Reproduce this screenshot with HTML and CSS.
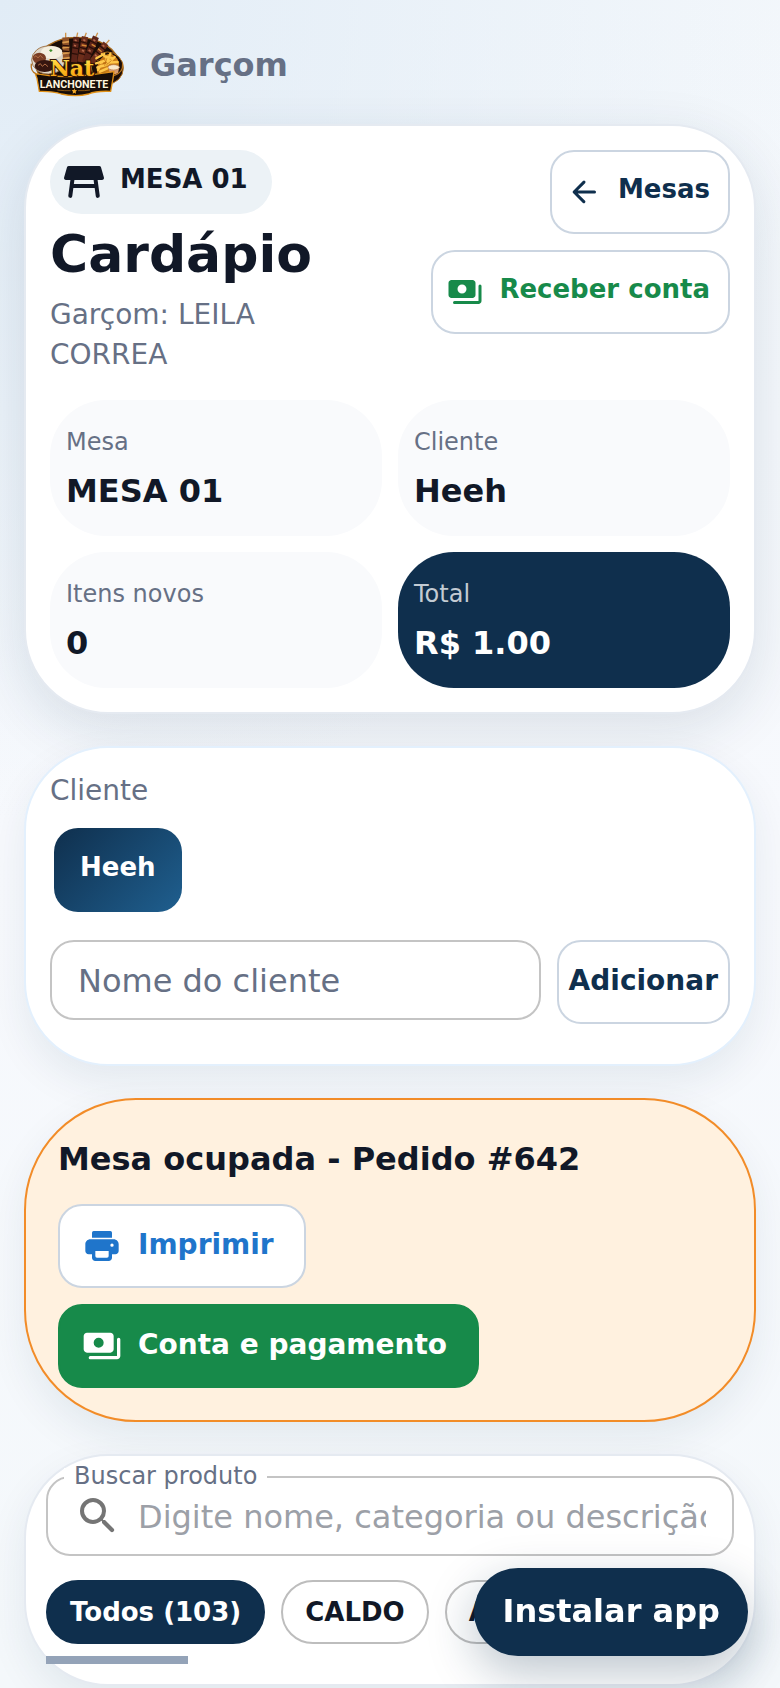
FILE: index.html
```html
<!DOCTYPE html>
<html lang="pt-BR">
<head>
    <meta charset="UTF-8">
    <meta name="viewport" content="width=device-width, initial-scale=1.0">
    <title>Garçom - Cardápio</title>
    <link rel="stylesheet" href="styles.css">
</head>
<body>
    <header class="topbar">
        <svg class="logo" viewBox="0 0 318 228" role="img" aria-label="Nat Lanchonete">
            <defs>
                <linearGradient id="gold" x1="0" y1="0" x2="0" y2="1">
                    <stop offset="0" stop-color="#fff06a"/>
                    <stop offset="0.5" stop-color="#ffc021"/>
                    <stop offset="1" stop-color="#f59a12"/>
                </linearGradient>
            </defs>
            <ellipse cx="160" cy="116" rx="124" ry="82" fill="#1b0d07" stroke="#a8691c" stroke-width="4"/>
            <ellipse cx="250" cy="126" rx="48" ry="48" fill="#1b0d07" stroke="#b87420" stroke-width="3"/>
            <ellipse cx="73" cy="102" rx="50" ry="42" fill="#ded6c8" stroke="#a47b52" stroke-width="3"/>
            <ellipse cx="83" cy="79" rx="32" ry="19" fill="#f5efdf"/>
            <ellipse cx="46" cy="97" rx="20" ry="17" fill="#7a3d24"/>
            <ellipse cx="62" cy="120" rx="30" ry="18" fill="#36160f"/>
            <path d="M30 94l6-5 6 7 7-8 8 9M42 118l7-5 6 8 8-7 9 8" stroke="#b06c44" stroke-width="3" fill="none"/>
            <path d="M75 73l6-4 5 5-6 4z" fill="#3f8f2c"/>
            <g>
                <path d="M125 20v18M161 20l-4 18M187 20l-6 16M221 20l-7 16M256 42l-12 14" stroke="#d0944a" stroke-width="4"/>
                <path d="M125 34l2 72" stroke="#8f5128" stroke-width="20"/>
                <path d="M157 33l-7 76" stroke="#5c2419" stroke-width="18"/>
                <path d="M183 32l-14 76" stroke="#6d2e1b" stroke-width="19"/>
                <path d="M216 32l-33 76" stroke="#5c2419" stroke-width="19"/>
                <path d="M246 52l-46 60" stroke="#6d2e1b" stroke-width="18"/>
                <path d="M115 50l20-3M115 66l21-3M116 83l21-3M117 98l20-3" stroke="#d99a4c" stroke-width="5"/>
                <path d="M116 58l20 2M116 75l20 2M147 48l19 3M145 65l18 3M143 82l18 3M171 47l19 5M168 64l19 5M165 81l18 5M200 45l18 9M193 61l18 9M186 77l18 9M228 60l15 12M216 76l15 12" stroke="#2a0e08" stroke-width="4"/>
                <path d="M152 42l6 2M150 58l6 2M178 41l6 3M174 73l6 3M208 41l6 4M194 72l6 4M236 57l5 5M213 86l5 5" stroke="#b5694a" stroke-width="5"/>
                <path d="M173 57l15 3M203 55l12 7M222 68l11 9" stroke="#d98a35" stroke-width="4"/>
            </g>
            <g stroke-linecap="round">
                <path d="M218 128q8-40 42-46 30 16 24 40l-20 16-44 4z" fill="#c97c18"/>
                <path d="M217 97l24-13M216 112l30-9M220 124l26-7M228 137l22-10M244 91l24 6M259 83l-10 26M272 93l-22 22M281 108l-27 2M234 84l22 20M222 132l12-22" stroke="#ffc84a" stroke-width="7"/>
                <path d="M220 104l22-8M222 118l24-8M248 98l-6 20M262 104l-16 14M236 96l14 16" stroke="#b96a12" stroke-width="2"/>
            </g>
            <path d="M253 124q17-10 33 0l-4 17q-13 8-25 0z" fill="#d89b6d"/>
            <ellipse cx="269" cy="124" rx="17" ry="8" fill="#fae8c9" stroke="#b8794c" stroke-width="2"/>
            <path d="M34 143q62 12 118 8t118-14l-3 20-7 39q-45-2-66 8-39 10-82 0-24-9-66-8l-7-39z" fill="#170d08" stroke="#e19118" stroke-width="4" stroke-linejoin="round"/>
            <path d="M22 113q-3 24 14 30M296 113q2 27-26 36" fill="none" stroke="#b87420" stroke-width="4"/>
            <text class="logo-name" x="77" y="149" fill="url(#gold)">Nat</text>
            <text class="logo-place" x="47" y="185">LANCHONETE</text>
            <path d="M100 192q22 3 40 2M162 194q20 1 36-2" stroke="#c27a18" stroke-width="2" fill="none"/>
            <path d="M151 187l2 5 6 1-4 4 1 6-5-3-5 3 1-6-4-4 6-1z" fill="#f5aa24"/>
        </svg>
        <span class="role">Garçom</span>
    </header>

    <main class="page">
        <section class="card hero">
            <div class="hero-top">
                <div class="hero-info">
                    <div class="table-tag">
                        <svg class="icon-large" viewBox="0 0 24 24"><path d="M21.96 9.73l-1.43-5A1 1 0 0 0 19.57 4H4.43a1 1 0 0 0-.96.73l-1.43 5C1.86 10.36 2.34 11 3 11h2.2l-1.05 7.87a1 1 0 0 0 1.98.26L6.67 15h10.67l.55 4.13a1 1 0 0 0 1.98-.26L18.8 11H21c.66 0 1.14-.64.96-1.27zM6.93 13l.27-2h9.6l.27 2z"/></svg>
                        <span class="small-label">MESA 01</span>
                    </div>
                    <h1>Cardápio</h1>
                    <p class="waiter">Garçom: LEILA CORREA</p>
                </div>
                <div class="hero-actions">
                    <button type="button" class="btn btn-small">
                        <svg class="icon-small" viewBox="0 0 24 24"><path d="M19 11H7.83l4.88-4.88a1 1 0 0 0-1.42-1.41l-6.59 6.58a1 1 0 0 0 0 1.41l6.59 6.59a1 1 0 0 0 1.41-1.41L7.83 13H19a1 1 0 0 0 0-2z"/></svg>
                        <span class="small-label">Mesas</span>
                    </button>
                    <button type="button" class="btn btn-small btn-green-text">
                        <svg class="icon-small" viewBox="0 0 24 24"><path d="M19 14V6c0-1.100-.9-2-2-2H3c-1.100 0-2 .9-2 2v8c0 1.100.9 2 2 2h14c1.100 0 2-.9 2-2zm-9-1a3 3 0 1 1 0-6 3 3 0 0 1 0 6zm13-5v10c0 1.100-.9 2-2 2H5a1 1 0 0 1 0-2h16V8a1 1 0 0 1 2 0z"/></svg>
                        <span class="small-label">Receber conta</span>
                    </button>
                </div>
            </div>
            <div class="stats">
                <div class="stat">
                    <span class="stat-label">Mesa</span>
                    <strong class="stat-value">MESA 01</strong>
                </div>
                <div class="stat">
                    <span class="stat-label">Cliente</span>
                    <strong class="stat-value">Heeh</strong>
                </div>
                <div class="stat">
                    <span class="stat-label">Itens novos</span>
                    <strong class="stat-value">0</strong>
                </div>
                <div class="stat stat-total">
                    <span class="stat-label">Total</span>
                    <strong class="stat-value">R$ 1.00</strong>
                </div>
            </div>
        </section>

        <section class="card client">
            <label class="client-title" for="clientName">Cliente</label>
            <div class="client-list">
                <button type="button" class="btn client-button"><span class="small-label">Heeh</span></button>
            </div>
            <form class="client-form">
                <input type="text" id="clientName" class="client-input" placeholder="Nome do cliente">
                <button type="button" class="btn btn-add"><span class="label">Adicionar</span></button>
            </form>
        </section>

        <section class="card order">
            <h2>Mesa ocupada - Pedido #642</h2>
            <button type="button" class="btn btn-print">
                <svg class="icon" viewBox="0 0 24 24"><path d="M19 8H5c-1.660 0-3 1.340-3 3v4c0 1.100.9 2 2 2h2v2c0 1.100.9 2 2 2h8c1.100 0 2-.9 2-2v-2h2c1.100 0 2-.9 2-2v-4c0-1.660-1.340-3-3-3zm-4 11H9a1 1 0 0 1-1-1v-3h8v3a1 1 0 0 1-1 1zm3-6.500a1 1 0 1 1 0-2 1 1 0 0 1 0 2zM17 3H7a1 1 0 0 0-1 1v3h12V4a1 1 0 0 0-1-1z"/></svg>
                <span class="label">Imprimir</span>
            </button>
            <button type="button" class="btn btn-pay">
                <svg class="icon" viewBox="0 0 24 24"><path d="M19 14V6c0-1.100-.9-2-2-2H3c-1.100 0-2 .9-2 2v8c0 1.100.9 2 2 2h14c1.100 0 2-.9 2-2zm-9-1a3 3 0 1 1 0-6 3 3 0 0 1 0 6zm13-5v10c0 1.100-.9 2-2 2H5a1 1 0 0 1 0-2h16V8a1 1 0 0 1 2 0z"/></svg>
                <span class="label">Conta e pagamento</span>
            </button>
        </section>

        <section class="card search">
            <div class="search-field">
                <label class="search-label" for="search">Buscar produto</label>
                <svg class="icon-large" viewBox="0 0 24 24"><path d="M15.500 14h-.79l-.28-.27A6.470 6.470 0 0 0 16 9.500 6.500 6.500 0 1 0 9.500 16c1.610 0 3.090-.59 4.230-1.570l.27.28v.79l4.250 4.250a1.060 1.060 0 0 0 1.500-1.500zm-6 0a4.500 4.500 0 1 1 0-9 4.500 4.500 0 0 1 0 9z"/></svg>
                <input type="text" id="search" class="search-input" placeholder="Digite nome, categoria ou descrição">
            </div>
            <div class="categories">
                <button type="button" class="category category-active">Todos (103)</button>
                <button type="button" class="category">CALDO</button>
                <button type="button" class="category">AÇAÍ</button>
            </div>
            <div class="scroll-track"><div class="scroll-thumb"></div></div>
        </section>
    </main>

    <button type="button" class="install">Instalar app</button>
</body>
</html>
```
FILE: styles.css
```css
:root {
    --navy: #0f2f4d;
    --green: #178a4a;
    --blue: #1f75cb;
    --text-dark: #111827;
    --text-light: #667085;
    --border: #cbd5e1;
    --white: #ffffff;
}

* {
    box-sizing: border-box;
}

body {
    margin: 0;
    min-height: 100vh;
    font-family: "DejaVu Sans", Verdana, sans-serif;
    color: var(--text-dark);
    background: radial-gradient(circle at top left, #e1ecf6 0, rgba(225, 236, 246, 0) 820px),
        linear-gradient(180deg, #f3f7fb, #f7f9fd 50%, #f4f8fb);
}

button,
input {
    font-family: inherit;
}

svg {
    fill: currentColor;
    flex-shrink: 0;
}

h1,
h2,
p {
    margin: 0;
}

.topbar {
    display: flex;
    align-items: center;
    gap: 20px;
    padding: 26px 24px 22px;
}

.logo {
    width: 106px;
    height: 76px;
}

.logo-name {
    font-family: "DejaVu Serif", serif;
    font-size: 66px;
    font-weight: bold;
    stroke: #351504;
    stroke-width: 6px;
    paint-order: stroke;
}

.logo-place {
    font-family: Roboto, sans-serif;
    font-size: 32px;
    font-weight: bold;
    fill: #fff5df;
}

.role {
    font-size: 32px;
    font-weight: bold;
    line-height: 40px;
    padding-top: 2px;
    color: var(--text-light);
}

.page {
    display: flex;
    flex-direction: column;
    gap: 32px;
    padding: 0 24px 2px;
}

.card {
    background: var(--white);
    border: 2px solid #e5eaf1;
    border-radius: 84px;
    padding: 24px;
    box-shadow: 0 16px 40px rgba(15, 47, 77, 0.08);
}

.hero {
    box-shadow: 0 16px 56px rgba(15, 47, 77, 0.12);
}

.hero-top {
    display: grid;
    grid-template-columns: 1fr 1fr;
    gap: 32px;
}

.hero-info {
    display: flex;
    flex-direction: column;
    align-items: flex-start;
    gap: 10px;
}

.table-tag {
    display: flex;
    align-items: center;
    gap: 12px;
    height: 64px;
    padding: 0 24px 0 10px;
    border-radius: 32px;
    background: #ecf2f6;
}

h1 {
    font-size: 52px;
    line-height: 61px;
}

.waiter {
    font-size: 28px;
    line-height: 40px;
    color: var(--text-light);
}

.hero-actions {
    display: flex;
    flex-direction: column;
    align-items: flex-end;
    gap: 16px;
}

.icon-small {
    width: 36px;
    height: 36px;
}

.icon {
    width: 40px;
    height: 40px;
}

.icon-large {
    width: 48px;
    height: 48px;
}

.label {
    font-size: 28px;
    font-weight: bold;
    padding-bottom: 4px;
}

.small-label {
    font-size: 26px;
    font-weight: bold;
    padding-bottom: 6px;
}

.btn {
    display: flex;
    align-items: center;
    justify-content: center;
    gap: 16px;
    height: 84px;
    padding: 0 30px 0 22px;
    border: 2px solid var(--border);
    border-radius: 24px;
    background: var(--white);
    color: var(--navy);
    white-space: nowrap;
    cursor: pointer;
}

.btn-small {
    padding: 0 18px 0 14px;
}

.btn-green-text {
    color: var(--green);
}

.stats {
    display: grid;
    grid-template-columns: 1fr 1fr;
    gap: 16px;
    margin-top: 25px;
}

.stat {
    display: flex;
    flex-direction: column;
    gap: 8px;
    padding: 24px 16px 22px;
    border-radius: 56px;
    background: #f9fafc;
}

.stat-label {
    font-size: 24px;
    line-height: 36px;
    color: var(--text-light);
}

.stat-value {
    font-size: 32px;
    line-height: 46px;
}

.stat-total {
    background: var(--navy);
    color: var(--white);
}

.stat-total .stat-label {
    color: #c3cbd3;
}

.client {
    border-color: #e3f0fd;
    padding-bottom: 40px;
}

.client-title {
    display: block;
    font-size: 28px;
    line-height: 38px;
    color: var(--text-light);
}

.client-list {
    display: flex;
    margin: 14px 0 24px;
    padding: 4px;
}

.client-button {
    border: none;
    padding: 0 26px;
    background: linear-gradient(135deg, var(--navy), #1f5f8f);
    color: var(--white);
}

.client-form {
    display: flex;
    align-items: flex-start;
    gap: 16px;
}

.client-input {
    flex: 1;
    min-width: 0;
    height: 80px;
    padding: 2px 26px 0;
    border: 2px solid #c4c4c4;
    border-radius: 24px;
    background: var(--white);
    font-size: 32px;
    color: var(--text-dark);
}

.client-input::placeholder {
    color: var(--text-light);
}

.btn-add {
    padding: 0 10px;
}

.order {
    display: flex;
    flex-direction: column;
    align-items: flex-start;
    gap: 16px;
    padding: 32px;
    border-color: #f28c28;
    border-radius: 112px;
    background: #fff1df;
}

h2 {
    font-size: 32px;
    line-height: 54px;
    padding-bottom: 2px;
}

.btn-print {
    color: var(--blue);
}

.btn-pay {
    border-color: var(--green);
    background: var(--green);
    color: var(--white);
}

.search {
    padding: 20px;
}

.search-field {
    position: relative;
    display: flex;
    align-items: center;
    gap: 16px;
    height: 80px;
    padding: 0 26px;
    border: 2px solid #c4c4c4;
    border-radius: 24px;
    color: #757575;
}

/* label sits on the top border of the field */
.search-label {
    position: absolute;
    top: -10px;
    left: 16px;
    padding: 0 10px;
    background: var(--white);
    font-size: 24px;
    line-height: 16px;
    color: var(--text-light);
}

.search-input {
    flex: 1;
    min-width: 0;
    height: 56px;
    padding: 2px 0 0;
    border: none;
    background: transparent;
    font-size: 32px;
    color: var(--text-dark);
}

.search-input::placeholder {
    color: #9ca0a7;
}

.categories {
    display: flex;
    gap: 16px;
    margin: 24px 0 12px;
    overflow: hidden;
}

.category {
    flex-shrink: 0;
    height: 64px;
    padding: 0 22px;
    border: 2px solid #bdbdbd;
    border-radius: 32px;
    background: var(--white);
    color: var(--text-dark);
    font-size: 26px;
    font-weight: bold;
}

.category-active {
    border-color: var(--navy);
    background: var(--navy);
    color: var(--white);
}

.scroll-track {
    height: 8px;
}

.scroll-thumb {
    width: 142px;
    height: 8px;
    background: #94a3b8;
}

.install {
    position: fixed;
    right: 32px;
    bottom: 32px;
    height: 88px;
    padding: 0 28px 2px;
    border: none;
    border-radius: 44px;
    background: var(--navy);
    color: var(--white);
    font-size: 32px;
    font-weight: bold;
    box-shadow: 0 16px 48px rgba(15, 47, 77, 0.28);
    cursor: pointer;
}
```
